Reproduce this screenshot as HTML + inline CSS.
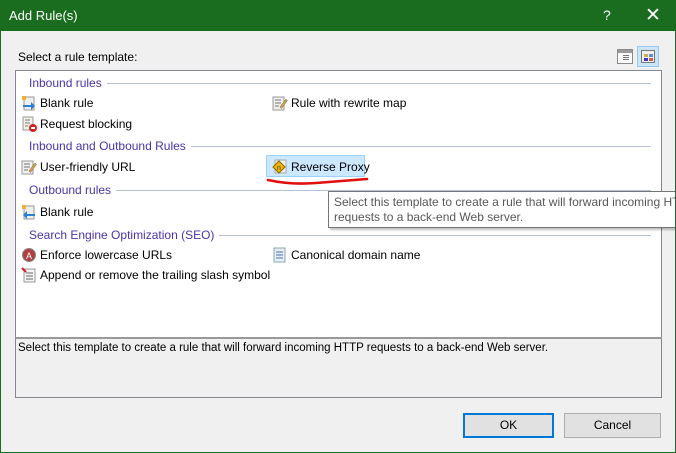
<!DOCTYPE html>
<html><head><meta charset="utf-8"><style>
*{margin:0;padding:0;box-sizing:border-box}
body{width:676px;height:453px;overflow:hidden;background:#f0f0f0;font-family:"Liberation Sans",sans-serif;font-size:12px;color:#000;position:relative}
.abs{position:absolute}
#title{left:0;top:0;width:676px;height:31px;background:#1a6d1e;color:#fff;font-size:13px}
.frame{border:1px solid #1a6d1e;border-top:none;left:0;top:31px;width:676px;height:422px;z-index:5;pointer-events:none}
#list{left:15px;top:70px;width:647px;height:268px;background:#fff;border:1px solid #828790}
.hd{position:absolute;left:13px;color:#4a34a6;display:flex;align-items:center;width:622px;white-space:nowrap}
.hd:after{content:"";flex:1;height:1px;background:#b7c0d6;margin-left:5px}
.it{position:absolute;white-space:nowrap;display:flex;align-items:center}
.it svg{margin-right:3px}
#desc{left:15px;top:337px;width:647px;height:61px;border:1px solid #828790;border-top:2px solid #9a9a9a;background:#f0f0f0;padding:3px 2px;font-size:11.5px;white-space:nowrap}
.btn{position:absolute;top:413px;height:25px;background:#e1e1e1;border:1px solid #adadad;text-align:center;line-height:23px}
#tip{left:328px;top:191px;width:400px;height:37px;background:#fff;border:1px solid #767676;color:#575757;padding:3px 5px;line-height:15px;box-shadow:2px 2px 2px rgba(0,0,0,.25);white-space:nowrap;font-size:12px}
</style></head><body>
<div class="abs frame"></div>
<div class="abs" id="title"><span class="abs" style="left:9px;top:8px">Add Rule(s)</span><span class="abs" style="left:603px;top:7px;font-size:14px">?</span><span class="abs" style="left:645px;top:4px;font-size:19px;font-weight:300">✕</span></div>
<div class="abs" style="left:18px;top:50px">Select a rule template:</div>
<div class="abs" style="left:617px;top:49px;width:16px;height:15px;border:1px solid #8a8a8a;background:#fafafa"><div style="height:3px;background:#9a9a9a"></div><div style="position:absolute;left:5px;top:5px;width:6px;height:1px;background:#777;box-shadow:0 2px #777,0 4px #777"></div></div>
<div class="abs" style="left:637px;top:46px;width:22px;height:21px;background:#cce4f7;border:1px solid #99c9ef"><div style="position:absolute;left:3px;top:3px;width:14px;height:13px;border:1px solid #777;background:#eee"><div style="position:absolute;left:2px;top:3px;width:4px;height:3px;background:#c9b04a"></div><div style="position:absolute;left:7px;top:3px;width:4px;height:3px;background:#5a8fd0"></div><div style="position:absolute;left:2px;top:7px;width:4px;height:3px;background:#3a3ac0"></div><div style="position:absolute;left:7px;top:7px;width:4px;height:3px;background:#d06040"></div></div></div>
<div class="abs" id="list">
<div class="hd" style="top:5px">Inbound rules</div>
<div class="it" style="left:5px;top:24px"><svg width="16" height="16"><rect x="3" y="2" width="10" height="13" fill="#eee" stroke="#999"/><rect x="1" y="1" width="4" height="4" fill="#f0b030"/><path d="M2 10h8v-3l4 4-4 4v-3H2z" fill="#2d7fd0"/></svg>Blank rule</div>
<div class="it" style="left:5px;top:45px"><svg width="16" height="16"><rect x="2" y="1" width="10" height="13" fill="#f4f0e8" stroke="#999"/><path d="M4 4h5M4 7h5M4 10h3" stroke="#777"/><circle cx="12" cy="12" r="4" fill="#d02020"/><rect x="10" y="11" width="4" height="2" fill="#fff"/></svg>Request blocking</div>
<div class="it" style="left:256px;top:24px"><svg width="16" height="16"><rect x="1" y="2" width="11" height="13" fill="#f0f0f0" stroke="#999"/><path d="M3 5h6M3 8h6M3 11h4" stroke="#777"/><path d="M8 12l6-8 1.5 1.5-6 8z" fill="#e0a030" stroke="#666" stroke-width=".5"/></svg>Rule with rewrite map</div>
<div class="hd" style="top:68px">Inbound and Outbound Rules</div>
<div class="it" style="left:5px;top:88px"><svg width="16" height="16"><rect x="1" y="2" width="11" height="13" fill="#f0f0f0" stroke="#999"/><path d="M3 5h6M3 8h6M3 11h4" stroke="#777"/><path d="M8 12l6-8 1.5 1.5-6 8z" fill="#e0a030" stroke="#666" stroke-width=".5"/></svg>User-friendly URL</div>
<div class="abs" style="left:250px;top:84px;width:99px;height:22px;background:#cce8ff;border:1px solid #99d1ff"></div>
<div class="it" style="left:256px;top:88px"><svg width="16" height="16"><rect x="3" y="1" width="11" height="13" fill="#eee" stroke="#aaa"/><path d="M7 2l6 6-6 6-6-6z" fill="#f2b500" stroke="#8a6a00"/><text x="5" y="11" font-size="7" fill="#333">n</text></svg>Reverse Proxy</div>
<svg class="abs" style="left:250px;top:106px" width="104" height="10"><path d="M2 3 Q25 8 50 6 T101 2" stroke="#e01010" stroke-width="2.6" fill="none" stroke-linecap="round"/></svg>
<div class="hd" style="top:112px">Outbound rules</div>
<div class="it" style="left:5px;top:133px"><svg width="16" height="16"><rect x="3" y="2" width="10" height="13" fill="#eee" stroke="#999"/><rect x="1" y="1" width="4" height="4" fill="#f0b030"/><path d="M14 10H6v-3l-4 4 4 4v-3h8z" fill="#2d7fd0"/></svg>Blank rule</div>
<div class="hd" style="top:157px">Search Engine Optimization (SEO)</div>
<div class="it" style="left:5px;top:176px"><svg width="16" height="16"><circle cx="8" cy="8" r="6.5" fill="#b04040" stroke="#888"/><text x="5" y="12" font-size="9" fill="#fff">A</text></svg>Enforce lowercase URLs</div>
<div class="it" style="left:256px;top:176px"><svg width="16" height="16"><rect x="2" y="1" width="11" height="14" fill="#e8eef8" stroke="#8aa"/><path d="M4 5h7M4 8h7M4 11h7" stroke="#4a70b0"/></svg>Canonical domain name</div>
<div class="it" style="left:5px;top:196px"><svg width="16" height="16"><rect x="3" y="2" width="11" height="13" fill="#f4f4f4" stroke="#999"/><path d="M5 6h7M5 9h7M5 12h7" stroke="#666"/><path d="M1 1l4 4" stroke="#d02020" stroke-width="2"/></svg>Append or remove the trailing slash symbol</div>
</div>
<div class="abs" id="tip">Select this template to create a rule that will forward incoming HTTP<br>requests to a back-end Web server.</div>
<div class="abs" id="desc">Select this template to create a rule that will forward incoming HTTP requests to a back-end Web server.</div>
<div class="btn" style="left:463px;width:91px;border:2px solid #0078d7;line-height:21px">OK</div>
<div class="btn" style="left:564px;width:97px">Cancel</div>
</body></html>
